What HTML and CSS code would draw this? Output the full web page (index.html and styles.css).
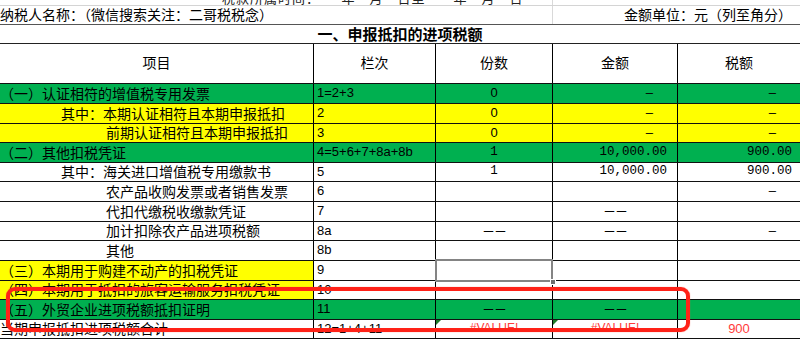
FILE: index.html
```html
<!DOCTYPE html>
<html lang="zh">
<head>
<meta charset="utf-8">
<title>申报抵扣的进项税额</title>
<link rel="stylesheet" href="styles.css">
</head>
<body>
<div class="sheet">
  <div class="band band-top">
    <div class="band-left"><span class="top-text">税款所属时间：　　年　月　日至　　年　月　日</span></div>
    <div class="band-right"></div>
  </div>
  <div class="band band-name">
    <div class="band-left">纳税人名称：（微信搜索关注：二哥税税念）</div>
    <div class="band-right unit">金额单位：元（列至角分）</div>
  </div>
  <div class="title">一、申报抵扣的进项税额</div>

  <div class="row head">
    <div class="c ctr">项目</div>
    <div class="c ctr">栏次</div>
    <div class="c ctr">份数</div>
    <div class="c ctr">金额</div>
    <div class="c ctr">税额</div>
  </div>

  <div class="row h20 green">
    <div class="c">（一）认证相符的增值税专用发票</div>
    <div class="c ar">1=2+3</div>
    <div class="c ar ctr">0</div>
    <div class="c dash">–</div>
    <div class="c dash">–</div>
  </div>
  <div class="row h20 yellow">
    <div class="c in1">其中：本期认证相符且本期申报抵扣</div>
    <div class="c ar">2</div>
    <div class="c ar ctr">0</div>
    <div class="c dash">–</div>
    <div class="c dash">–</div>
  </div>
  <div class="row h19 yellow">
    <div class="c in2">前期认证相符且本期申报抵扣</div>
    <div class="c ar">3</div>
    <div class="c ar ctr">0</div>
    <div class="c dash">–</div>
    <div class="c dash">–</div>
  </div>
  <div class="row h20 green">
    <div class="c">（二）其他扣税凭证</div>
    <div class="c ar">4=5+6+7+8a+8b</div>
    <div class="c mono ctr">1</div>
    <div class="c mono amt">10,000.00</div>
    <div class="c mono tax">900.00</div>
  </div>
  <div class="row h19">
    <div class="c in1">其中：海关进口增值税专用缴款书</div>
    <div class="c ar">5</div>
    <div class="c mono ctr">1</div>
    <div class="c mono amt">10,000.00</div>
    <div class="c mono tax">900.00</div>
  </div>
  <div class="row h20">
    <div class="c in2">农产品收购发票或者销售发票</div>
    <div class="c ar">6</div>
    <div class="c"></div>
    <div class="c"></div>
    <div class="c dash">–</div>
  </div>
  <div class="row h20">
    <div class="c in2">代扣代缴税收缴款凭证</div>
    <div class="c ar">7</div>
    <div class="c"></div>
    <div class="c ctr dd">－－</div>
    <div class="c"></div>
  </div>
  <div class="row h19">
    <div class="c in2">加计扣除农产品进项税额</div>
    <div class="c ar">8a</div>
    <div class="c ctr dd">－－</div>
    <div class="c ctr dd">－－</div>
    <div class="c dash">–</div>
  </div>
  <div class="row h20">
    <div class="c in2">其他</div>
    <div class="c ar">8b</div>
    <div class="c"></div>
    <div class="c"></div>
    <div class="c"></div>
  </div>
  <div class="row h20">
    <div class="c yellow">（三）本期用于购建不动产的扣税凭证</div>
    <div class="c ar">9</div>
    <div class="c cell-sel"><span class="sel"></span><span class="handle"></span></div>
    <div class="c"></div>
    <div class="c"></div>
  </div>
  <div class="row h19">
    <div class="c yellow">（四）本期用于抵扣的旅客运输服务扣税凭证</div>
    <div class="c ar">10</div>
    <div class="c"></div>
    <div class="c"></div>
    <div class="c"></div>
  </div>
  <div class="row h20 green">
    <div class="c">（五）外贸企业进项税额抵扣证明</div>
    <div class="c ar">11</div>
    <div class="c ctr dd">－－</div>
    <div class="c ctr dd">－－</div>
    <div class="c"></div>
  </div>
  <div class="row h19">
    <div class="c">当期申报抵扣进项税额合计</div>
    <div class="c ar">12=1+4+11</div>
    <div class="c ar ctr err flagged">#VALUE!</div>
    <div class="c ar ctr err flagged">#VALUE!</div>
    <div class="c ar ctr err">900</div>
  </div>

  <div class="redbox"></div>
</div>
</body>
</html>
```

FILE: styles.css
```css
* {
  box-sizing: border-box;
}

body {
  margin: 0;
  background: #ffffff;
  font-family: "Noto Sans CJK SC", "Liberation Sans", sans-serif;
  font-size: 14px;
  color: #000000;
}

.sheet {
  position: relative;
  width: 800px;
  height: 342px;
  overflow: hidden;
}

/* top bands (outside the table) */
.band {
  display: grid;
  grid-template-columns: 553px 247px;
}

.band-left {
  border-right: 1px solid #d9d9d9;
  white-space: nowrap;
}

.band-top {
  height: 6px;
  grid-template-rows: 5px;
  border-bottom: 1px solid #d4d4d4;
  overflow: hidden;
}

.band-top .band-left {
  height: 5px;
  display: flex;
  align-items: flex-end;
  padding-left: 222px;
  overflow: visible;
}

.top-text {
  display: block;
  line-height: 14px;
  height: 14px;
  flex: none;
  font-size: 13px;
  letter-spacing: 1px;
  color: #222;
}

.band-name {
  height: 19px;
  line-height: 17px;
  border-bottom: 1px solid #555555;
}

.unit {
  text-align: right;
  padding-right: 8px;
  white-space: nowrap;
}

.title {
  height: 19px;
  line-height: 17px;
  border-bottom: 1px solid #222222;
  text-align: center;
  font-weight: bold;
  font-size: 15px;
}

/* table rows */
.row {
  display: grid;
  grid-template-columns: 314px 122px 117px 125px 122px;
  border-bottom: 1px solid #111111;
}

.head {
  height: 40px;
  line-height: 37px;
}

.h19 {
  height: 19px;
  line-height: 17px;
}

.h20 {
  height: 20px;
  line-height: 18px;
}

.c {
  border-right: 1px solid #000000;
  white-space: nowrap;
  padding: 0;
}

.c:last-child {
  border-right: none;
}

.row .c:nth-child(2) {
  padding-left: 3px;
}

.ctr {
  text-align: center;
}

.row .c.ctr {
  padding-left: 0;
}

.in1 {
  padding-left: 61px;
}

.in2 {
  padding-left: 106px;
}

.green {
  background: #00b050;
}

.yellow {
  background: #ffff00;
}

.ar {
  font-family: "Liberation Sans", Arial, sans-serif;
  font-size: 13px;
}

.mono {
  font-family: "Liberation Mono", monospace;
  font-size: 12.5px;
}

.amt {
  text-align: right;
  padding-right: 10px;
}

.tax {
  text-align: right;
  padding-right: 8px;
}

.dash {
  font-family: "Liberation Sans", Arial, sans-serif;
  font-size: 13px;
  text-align: right;
  padding-right: 24px;
}

.dd {
  letter-spacing: -1px;
  font-size: 13px;
}

.err {
  color: #ff3b3b;
}

.err.flagged {
  font-size: 12px;
}

.flagged {
  position: relative;
}

.flagged::before {
  content: "";
  position: absolute;
  left: 0;
  top: 0;
  width: 0;
  height: 0;
  border-top: 5px solid #1e7b28;
  border-right: 5px solid transparent;
}

.cell-sel {
  position: relative;
}

.sel {
  position: absolute;
  left: -1px;
  right: -1px;
  top: -2px;
  bottom: -2px;
  border: 2px solid #848484;
}

.handle {
  position: absolute;
  right: -4px;
  bottom: -5px;
  width: 6px;
  height: 6px;
  background: #6e6e6e;
  border: 1px solid #ffffff;
}

.redbox {
  position: absolute;
  left: 6px;
  top: 287px;
  width: 684px;
  height: 45px;
  border: 4px solid #ff2218;
  border-radius: 9px;
  box-shadow: 0 0 1px #ff5a50;
}
```
